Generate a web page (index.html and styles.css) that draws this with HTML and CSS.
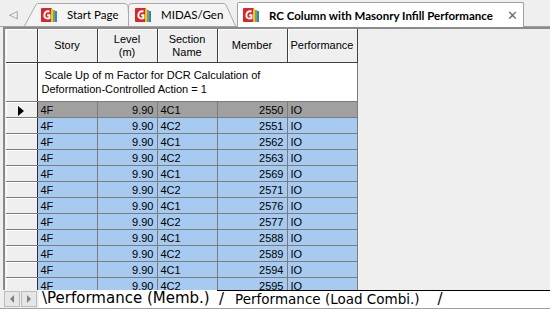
FILE: index.html
```html
<!DOCTYPE html>
<html>
<head>
    <title>RC Column with Masonry Infill Performance</title>
    <link rel="stylesheet" href="styles.css">
</head>
<body>
    <div class="tabbar">
        <div class="tab-scroll">&#9665;</div>
        <div class="tab tab-first">
            <svg class="tab-shape" width="106" height="23" viewBox="0 0 106 23"><path d="M0.5 23 L12 1.5 Q13 0.5 15 0.5 L100 0.5 Q103 0.5 104 3 L105.5 23" fill="#f4f4f4" stroke="#a9a9a9"/></svg>
            <svg class="logo" width="17" height="16" viewBox="0 0 17 16"><rect x="0" y="1" width="11" height="14" rx="1" fill="#d8262b"/><path d="M8.5 4.5 Q4.5 3.2 3.4 7.5 Q3 11.5 6.5 11.5 L8.5 11.2 L8.5 8.3 L6.2 8.3" fill="none" stroke="#fff" stroke-width="1.9"/><rect x="10" y="2" width="2" height="13" fill="#f2c12e"/><rect x="12" y="3" width="2" height="12" fill="#6ab04c"/><rect x="14" y="4" width="2" height="11" fill="#3b7fc4"/></svg>
            <span class="tab-label">Start Page</span>
        </div>
        <div class="tab tab-second">
            <svg class="tab-shape" width="108" height="23" viewBox="0 0 108 23"><path d="M0.5 23 L0.5 3 Q1 0.5 4 0.5 L95 0.5 Q97 0.5 98 2 L107.5 23" fill="#f4f4f4" stroke="#a9a9a9"/></svg>
            <svg class="logo" width="17" height="16" viewBox="0 0 17 16"><rect x="0" y="1" width="11" height="14" rx="1" fill="#d8262b"/><path d="M8.5 4.5 Q4.5 3.2 3.4 7.5 Q3 11.5 6.5 11.5 L8.5 11.2 L8.5 8.3 L6.2 8.3" fill="none" stroke="#fff" stroke-width="1.9"/><rect x="10" y="2" width="2" height="13" fill="#f2c12e"/><rect x="12" y="3" width="2" height="12" fill="#6ab04c"/><rect x="14" y="4" width="2" height="11" fill="#3b7fc4"/></svg>
            <span class="tab-label">MIDAS/Gen</span>
        </div>
        <div class="tab tab-active">
            <svg class="logo" width="17" height="16" viewBox="0 0 17 16"><rect x="0" y="1" width="11" height="14" rx="1" fill="#d8262b"/><path d="M8.5 4.5 Q4.5 3.2 3.4 7.5 Q3 11.5 6.5 11.5 L8.5 11.2 L8.5 8.3 L6.2 8.3" fill="none" stroke="#fff" stroke-width="1.9"/><rect x="10" y="2" width="2" height="13" fill="#f2c12e"/><rect x="12" y="3" width="2" height="12" fill="#6ab04c"/><rect x="14" y="4" width="2" height="11" fill="#3b7fc4"/></svg>
            <span class="tab-label">RC Column with Masonry Infill Performance</span>
            <span class="tab-close">&#10005;</span>
        </div>
    </div>

    <div class="sheet">
        <table class="data">
            <colgroup>
                <col class="c-head"><col class="c-60"><col class="c-60"><col class="c-60"><col class="c-70"><col class="c-70">
            </colgroup>
            <thead>
                <tr class="hdr">
                    <th></th>
                    <th>Story</th>
                    <th>Level<br>(m)</th>
                    <th>Section<br>Name</th>
                    <th>Member</th>
                    <th>Performance</th>
                </tr>
            </thead>
            <tbody>
                <tr class="note">
                    <td class="rh"></td>
                    <td colspan="5">Scale Up of m Factor for DCR Calculation of<br>Deformation-Controlled Action = 1</td>
                </tr>
                <tr class="sel"><td class="rh"><span class="arrow"></span></td><td>4F</td><td class="num">9.90</td><td>4C1</td><td class="num">2550</td><td>IO</td></tr>
                <tr><td class="rh"></td><td>4F</td><td class="num">9.90</td><td>4C2</td><td class="num">2551</td><td>IO</td></tr>
                <tr><td class="rh"></td><td>4F</td><td class="num">9.90</td><td>4C1</td><td class="num">2562</td><td>IO</td></tr>
                <tr><td class="rh"></td><td>4F</td><td class="num">9.90</td><td>4C2</td><td class="num">2563</td><td>IO</td></tr>
                <tr><td class="rh"></td><td>4F</td><td class="num">9.90</td><td>4C1</td><td class="num">2569</td><td>IO</td></tr>
                <tr><td class="rh"></td><td>4F</td><td class="num">9.90</td><td>4C2</td><td class="num">2571</td><td>IO</td></tr>
                <tr><td class="rh"></td><td>4F</td><td class="num">9.90</td><td>4C1</td><td class="num">2576</td><td>IO</td></tr>
                <tr><td class="rh"></td><td>4F</td><td class="num">9.90</td><td>4C2</td><td class="num">2577</td><td>IO</td></tr>
                <tr><td class="rh"></td><td>4F</td><td class="num">9.90</td><td>4C1</td><td class="num">2588</td><td>IO</td></tr>
                <tr><td class="rh"></td><td>4F</td><td class="num">9.90</td><td>4C2</td><td class="num">2589</td><td>IO</td></tr>
                <tr><td class="rh"></td><td>4F</td><td class="num">9.90</td><td>4C1</td><td class="num">2594</td><td>IO</td></tr>
                <tr><td class="rh"></td><td>4F</td><td class="num">9.90</td><td>4C2</td><td class="num">2595</td><td>IO</td></tr>
            </tbody>
        </table>
    </div>

    <div class="sheetbar">
        <div class="scroll-btns">
            <span class="sbtn"><span class="tri-left"></span></span>
            <span class="sbtn"><span class="tri-right"></span></span>
        </div>
        <div class="sheet-tab sheet-tab-active">\Performance (Memb.)</div>
        <div class="sheet-rest">
            <span class="slash">/</span>
            <span class="sheet-tab sheet-tab-other">Performance (Load Combi.)</span>
            <span class="slash slash-end">/</span>
        </div>
    </div>
</body>
</html>
```

FILE: styles.css
```css
html, body {
    margin: 0;
    padding: 0;
}

body {
    width: 550px;
    height: 309px;
    overflow: hidden;
    background-color: #efefef;
    display: flex;
    flex-direction: column;
    font-family: "Liberation Sans", Arial, sans-serif;
}

/* Document tabs */
.tabbar {
    height: 26px;
    flex: none;
    display: flex;
    align-items: flex-end;
    border-bottom: 1px solid #a0a0a0;
    background-color: #efefef;
}

.tab-scroll {
    width: 26px;
    height: 24px;
    line-height: 22px;
    font-size: 11px;
    color: #7a7a7a;
    text-align: center;
    align-self: flex-start;
    margin-top: 3px;
}

.tab {
    position: relative;
    height: 23px;
    display: flex;
    align-items: center;
    font-family: Lato, "Noto Sans", sans-serif;
    font-size: 11.5px;
    color: #000;
    white-space: nowrap;
}

.tab-shape {
    position: absolute;
    left: 0;
    top: 0;
}

.tab .logo,
.tab .tab-label,
.tab .tab-close {
    position: relative;
}

.tab-first {
    width: 106px;
    margin-left: -2px;
    padding-left: 17px;
    box-sizing: border-box;
}

.tab-second {
    width: 108px;
    margin-left: -2px;
    padding-left: 7px;
    box-sizing: border-box;
}

.logo {
    flex: none;
    margin-right: 9px;
}

.tab-active {
    width: 287px;
    height: 25px;
    margin-left: 1px;
    margin-bottom: -1px;
    padding-left: 5px;
    box-sizing: border-box;
    background-color: #fff;
    border: 1px solid #a0a0a0;
    border-bottom: none;
    border-radius: 2px 2px 0 0;
    font-weight: 700;
}

.tab-close {
    margin-left: auto;
    margin-right: 5px;
    font-size: 13px;
    font-weight: 400;
    color: #6a6a6a;
}

/* Grid */
.sheet {
    flex: 1;
    overflow: hidden;
    margin-left: 3px;
    border-top: 2px solid #8a8a8a;
    border-left: 2px solid #8a8a8a;
    background-color: #efefef;
}

.data {
    border-collapse: collapse;
    table-layout: fixed;
    font-size: 11px;
    margin-left: 1px;
}

.c-head { width: 31px; }
.c-60 { width: 60px; }
.c-70 { width: 70px; }

.data th {
    height: 33px;
    padding: 0;
    font-weight: normal;
    text-align: center;
    line-height: 13px;
    background-color: #efefef;
    border: 1px solid #404040;
    border-top: none;
    box-shadow: inset 1px 1px 0 #fff;
}

.data th:first-child {
    border-left: none;
}

.data td {
    height: 15px;
    padding: 0 3px;
    line-height: 14px;
    white-space: nowrap;
    overflow: hidden;
    border: 1px solid #7c7c7c;
    background-color: #a6caf0;
}

.data td.num {
    text-align: right;
}

.data td.rh {
    background-color: #efefef;
    border-left: none;
    border-right: 1px solid #303030;
    box-shadow: inset 1px 1px 0 #fff;
    text-align: center;
    padding: 0;
}

.data tr.note td {
    height: 38px;
    background-color: #fff;
    line-height: 14px;
    padding-left: 4px;
    text-indent: 3px;
}

.data tr.note td.rh {
    background-color: #efefef;
}

.data tr.sel td {
    background-color: #a0a0a0;
}

.data tr.sel td.rh {
    background-color: #efefef;
}

.arrow {
    display: inline-block;
    width: 0;
    height: 0;
    border-top: 5px solid transparent;
    border-bottom: 5px solid transparent;
    border-left: 6px solid #000;
    vertical-align: middle;
}

/* Sheet tabs */
.sheetbar {
    height: 18px;
    flex: none;
    display: flex;
    align-items: stretch;
    background-color: #fff;
    border-bottom: 1px solid #a0a0a0;
    font-family: "DejaVu Sans", "Liberation Sans", sans-serif;
    font-size: 15px;
    line-height: 17px;
}

.scroll-btns {
    display: flex;
    gap: 1px;
    padding: 1px 2px 0 4px;
    background-color: #efefef;
}

.sbtn {
    width: 16px;
    height: 16px;
    background-color: #e6e6e6;
    border: 1px solid #bcbcbc;
    box-sizing: border-box;
    display: flex;
    align-items: center;
    justify-content: center;
}

.tri-left {
    border-top: 4px solid transparent;
    border-bottom: 4px solid transparent;
    border-right: 4px solid #808080;
}

.tri-right {
    border-top: 4px solid transparent;
    border-bottom: 4px solid transparent;
    border-left: 4px solid #808080;
}

.sheet-tab {
    padding-left: 3px;
    white-space: nowrap;
    color: #000;
}

.sheet-tab-active {
    width: 178px;
    box-sizing: border-box;
}

.sheet-rest {
    flex: 1;
    display: flex;
    border-top: 1px solid #000;
    white-space: nowrap;
}

.slash {
    padding-left: 2px;
}

.sheet-tab-other {
    font-size: 13.5px;
    padding-left: 11px;
}

.slash-end {
    padding-left: 18px;
}
```
